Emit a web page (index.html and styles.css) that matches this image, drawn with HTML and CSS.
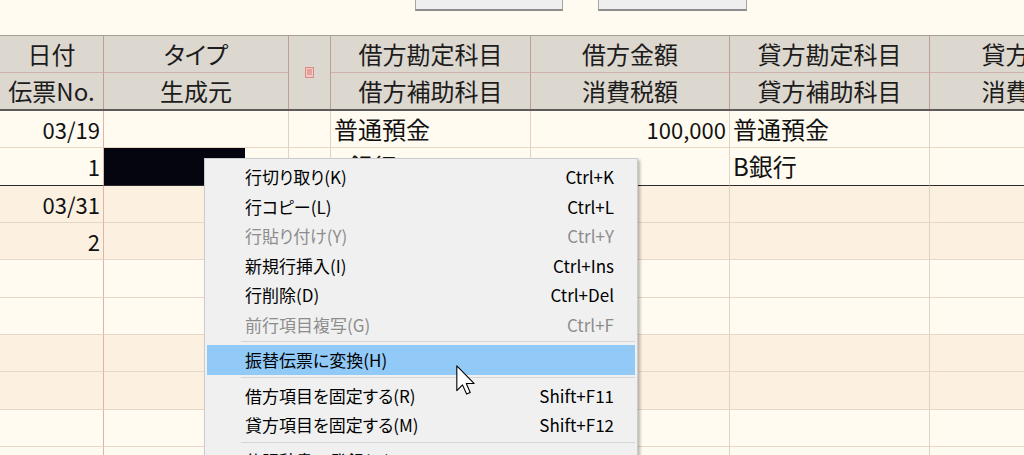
FILE: index.html
```html
<!doctype html>
<html>
<head>
<meta charset="UTF-8">
<title>仕訳入力</title>
<link rel="stylesheet" href="styles.css">
</head>
<body>
<div class="top">
	<div class="btn"></div>
	<div class="btn"></div>
</div>
<div class="sheet">
	<div class="head">
		<div class="hc">日付</div>
		<div class="hc">タイプ</div>
		<div class="hc hc-ico">
			<svg width="9" height="11" viewBox="0 0 9 11"><rect x="0.5" y="0.5" width="8" height="10" fill="#f3c9c6" stroke="#d98b86"/><rect x="2" y="2" width="5" height="6" fill="#e6a19c"/></svg>
		</div>
		<div class="hc">借方勘定科目</div>
		<div class="hc">借方金額</div>
		<div class="hc">貸方勘定科目</div>
		<div class="hc">貸方金額</div>
		<div class="hc r2">伝票No.</div>
		<div class="hc r2">生成元</div>
		<div class="hc r2">借方補助科目</div>
		<div class="hc r2">消費税額</div>
		<div class="hc r2">貸方補助科目</div>
		<div class="hc r2">消費税額</div>
	</div>
	<div class="row">
		<div class="c c1 num">03/19</div><div class="c"></div><div class="c"></div>
		<div class="c txt">普通預金</div><div class="c num">100,000</div><div class="c txt">普通預金</div><div class="c"></div>
	</div>
	<div class="row row-end">
		<div class="c c1 num">1</div><div class="c"><span class="edit"></span></div><div class="c"></div>
		<div class="c txt">A銀行</div><div class="c"></div><div class="c txt">B銀行</div><div class="c"></div>
	</div>
	<div class="row alt">
		<div class="c c1 num">03/31</div><div class="c"></div><div class="c"></div>
		<div class="c"></div><div class="c"></div><div class="c"></div><div class="c"></div>
	</div>
	<div class="row alt">
		<div class="c c1 num">2</div><div class="c"></div><div class="c"></div>
		<div class="c"></div><div class="c"></div><div class="c"></div><div class="c"></div>
	</div>
	<div class="row">
		<div class="c c1"></div><div class="c"></div><div class="c"></div>
		<div class="c"></div><div class="c"></div><div class="c"></div><div class="c"></div>
	</div>
	<div class="row">
		<div class="c c1"></div><div class="c"></div><div class="c"></div>
		<div class="c"></div><div class="c"></div><div class="c"></div><div class="c"></div>
	</div>
	<div class="row alt">
		<div class="c c1"></div><div class="c"></div><div class="c"></div>
		<div class="c"></div><div class="c"></div><div class="c"></div><div class="c"></div>
	</div>
	<div class="row alt">
		<div class="c c1"></div><div class="c"></div><div class="c"></div>
		<div class="c"></div><div class="c"></div><div class="c"></div><div class="c"></div>
	</div>
	<div class="row">
		<div class="c c1"></div><div class="c"></div><div class="c"></div>
		<div class="c"></div><div class="c"></div><div class="c"></div><div class="c"></div>
	</div>
	<div class="row">
		<div class="c c1"></div><div class="c"></div><div class="c"></div>
		<div class="c"></div><div class="c"></div><div class="c"></div><div class="c"></div>
	</div>
</div>

<ul class="menu">
	<li><span>行切り取り(K)</span><span>Ctrl+K</span></li>
	<li><span>行コピー(L)</span><span>Ctrl+L</span></li>
	<li class="off"><span>行貼り付け(Y)</span><span>Ctrl+Y</span></li>
	<li><span>新規行挿入(I)</span><span>Ctrl+Ins</span></li>
	<li><span>行削除(D)</span><span>Ctrl+Del</span></li>
	<li class="off"><span>前行項目複写(G)</span><span>Ctrl+F</span></li>
	<li class="sep"></li>
	<li class="on"><span>振替伝票に変換(H)</span><span></span></li>
	<li class="sep"></li>
	<li><span>借方項目を固定する(R)</span><span>Shift+F11</span></li>
	<li><span>貸方項目を固定する(M)</span><span>Shift+F12</span></li>
	<li class="sep"></li>
	<li><span>仕訳辞書へ登録(W)</span><span></span></li>
</ul>

<svg class="cursor" width="19" height="30" viewBox="0 0 12 19"><path d="M0.5 0.5 L0.5 16.2 L4.1 12.6 L6.7 18.4 L9 17.4 L6.5 11.7 L11.4 11.7 Z" fill="#fff" stroke="#000" stroke-width="0.7" stroke-linejoin="round"/></svg>
</body>
</html>
```

FILE: styles.css
```css
*{margin:0;padding:0;list-style:none;box-sizing:border-box;}
body{background:#fffbf0;overflow:hidden;height:455px;font-family:"Noto Sans CJK JP","Noto Sans",sans-serif;color:#111;position:relative;}
.top{height:35px;display:flex;gap:35px;padding-left:415px;}
.btn{width:148px;height:11px;background:#efefef;border:1px solid #a5a5a5;border-top:0;border-bottom:2px solid #8c8c8c;}
.btn + .btn{width:149px;}

.sheet{width:1130px;}
.head{display:grid;grid-template-columns:104px 185px 42px 200px 199px 200px 200px;grid-template-rows:37px 36px;background:#dcd7cf;border-top:1px solid #a9a199;border-bottom:2px solid #5e5a58;}
.hc{display:flex;align-items:center;justify-content:center;font-size:24px;font-feature-settings:"palt";color:#1c1c1c;border-right:1px solid #bf9e97;border-bottom:1px solid #cdb1aa;line-height:1;}
.hc.r2{border-bottom:0;}
.hc-ico{grid-row:span 2;border-bottom:0;}

.row{display:grid;grid-template-columns:104px 185px 42px 200px 199px 200px 200px;height:37.33px;}
.row.alt{background:#fcf1e1;}
.c{display:flex;align-items:center;border-right:1px solid #e3d2bf;border-bottom:1px solid #e6d7c6;font-size:24px;line-height:1;overflow:hidden;}
.c1{border-right-color:#e0b3aa;}
.row-end .c{border-bottom-color:#2b2b2b;}
.num{justify-content:flex-end;padding-right:3px;font-size:22px;}
.txt{padding-left:3px;}
.edit{display:block;width:141px;height:100%;background:#05050f;}

.menu{position:absolute;left:204px;top:158px;width:434px;height:320px;background:#f0f0f0;border:1px solid #cbcbcb;box-shadow:2px 2px 3px rgba(0,0,0,0.28);padding:3px 2px 0 2px;font-size:17px;font-feature-settings:"palt";}
.menu li{height:29.5px;display:flex;align-items:center;justify-content:space-between;padding:0 21px 0 38px;color:#000;}
.menu li.off{color:#8d8d8d;}
.menu li.on{background:#91c9f7;}
.menu li.sep{height:6px;padding:0;margin-left:34px;position:relative;}
.menu li.sep:after{content:"";position:absolute;left:0;right:0;top:2px;height:1px;background:#d6d6d6;}

.cursor{position:absolute;left:456px;top:365px;}
```
